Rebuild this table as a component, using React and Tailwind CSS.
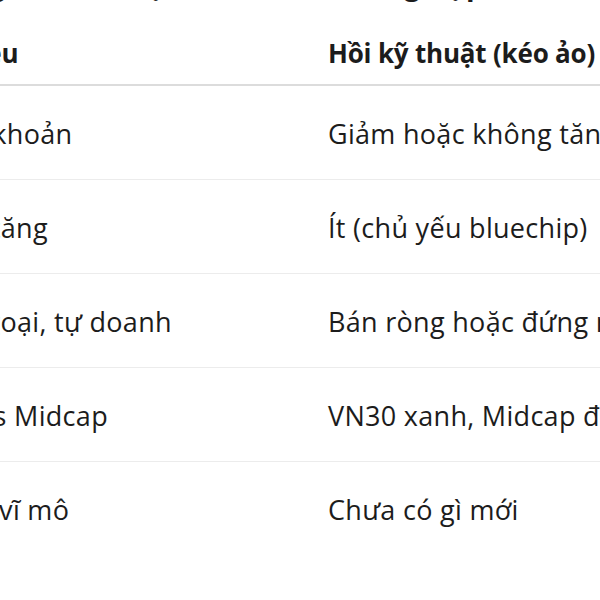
const rows = [
  ['Thanh khoản', 'Giảm hoặc không tăng'],
  ['Số mã tăng', 'Ít (chủ yếu bluechip)'],
  ['Khối ngoại, tự doanh', 'Bán ròng hoặc đứng ngoài'],
  ['VN30 vs Midcap', 'VN30 xanh, Midcap đỏ'],
  ['Tin tức vĩ mô', 'Chưa có gì mới'],
];

export default function App() {
  return (
    <div className="w-[600px] h-[600px] overflow-hidden bg-white text-[#1c1c1c] font-['Open_Sans',sans-serif] tracking-[0.3px]">
      <div className="ml-[-112px] w-[1000px]">
        <div className="w-[596px] flex justify-end mt-[-33px] h-[34px]">
          <h2 className="shrink-0 whitespace-nowrap text-[28px] font-bold leading-[34px]">
            Bảng so sánh đặc điểm hai trường hợp
          </h2>
        </div>
        <div className="grid grid-cols-[424px_1fr] border-b-2 border-[#dcdcdc] h-[85px] items-end pb-[11px] text-[26px] font-bold tracking-[-0.2px]">
          <div className="pl-[32px] pr-4">Chỉ tiêu</div>
          <div className="px-4 whitespace-nowrap">Hồi kỹ thuật (kéo ảo)</div>
        </div>
        {rows.map(([a, b], i) => (
          <div
            key={a}
            className={`grid grid-cols-[424px_1fr] h-[94px] items-center text-[27px] pt-[3px] ${i < rows.length - 1 ? 'border-b border-[#ececec]' : ''}`}
          >
            <div className="px-4">{a}</div>
            <div className="px-4 whitespace-nowrap">{b}</div>
          </div>
        ))}
      </div>
    </div>
  );
}
